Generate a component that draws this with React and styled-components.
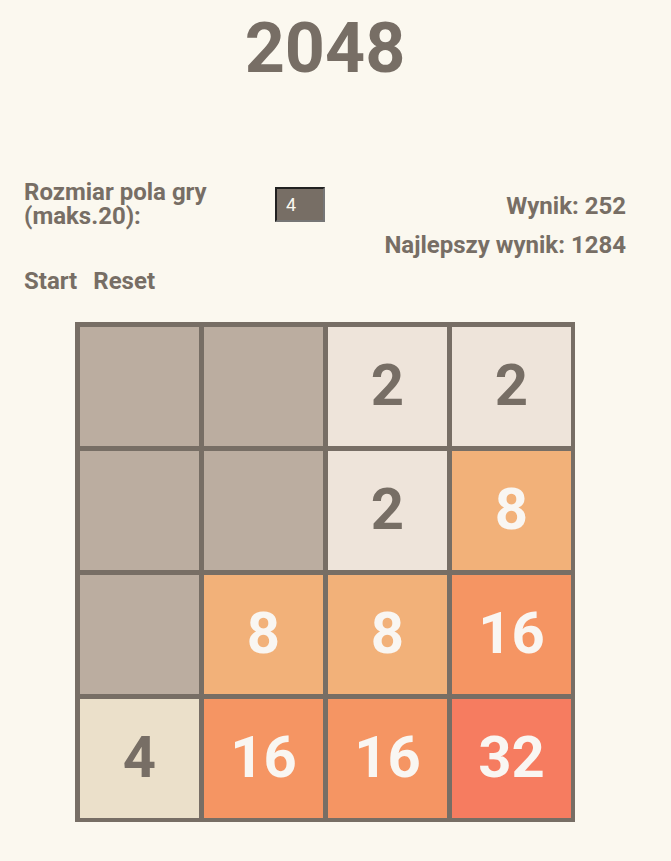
import React from "react";
import styled, { createGlobalStyle } from "styled-components";

const GlobalStyle = createGlobalStyle`
  * { box-sizing: border-box; }
  body {
    margin: 0;
    background: #fbf8ef;
    color: #776e65;
    font-family: Roboto, "Open Sans", sans-serif;
    font-weight: 700;
  }
`;

const Page = styled.main`
  padding: 10px 45px 38px 24px;
`;

const Title = styled.h1`
  margin: 0 0 94px;
  font-size: 70px;
  line-height: 76px;
  text-align: center;
`;

const Panel = styled.section`
  display: flex;
  justify-content: space-between;
  align-items: flex-start;
`;

const SizeField = styled.div`
  display: flex;
  align-items: center;
  gap: 40px;
  height: 48px;
`;

const SizeLabel = styled.label`
  width: 211px;
  font-size: 24px;
  line-height: 24px;
`;

const SizeInput = styled.input`
  width: 50px;
  height: 35px;
  padding: 1px 9px;
  border: 2px inset #767676;
  background: #776e65;
  color: #fcf9f0;
  font: 400 18px/24px Roboto, sans-serif;
`;

const Scores = styled.div`
  padding-top: 12px;
  font-size: 24px;
  text-align: right;
`;

const Score = styled.p`
  margin: 0;
  line-height: 28px;
  white-space: nowrap;

  & + & { margin-top: 11px; }
`;

const Actions = styled.div`
  display: flex;
  gap: 16px;
  margin: 8px 0 27px;
`;

const Action = styled.button`
  padding: 0;
  border: 0;
  background: none;
  color: inherit;
  font: inherit;
  font-size: 24px;
  line-height: 28px;
  cursor: pointer;
`;

const Board = styled.div`
  display: grid;
  grid-template-columns: repeat(4, 1fr);
  grid-template-rows: repeat(4, 1fr);
  gap: 5px;
  width: 100%;
  max-width: 500px;
  aspect-ratio: 1;
  margin: 0 auto;
  padding: 5px 4px 4px 5px;
  background: #776e65;
`;

const palette = {
  0: "#bbada0",
  2: "#eee4da",
  4: "#ebe0ca",
  8: "#f2b179",
  16: "#f59563",
  32: "#f67c60",
};

const Tile = styled.div`
  display: grid;
  place-items: center;
  padding-bottom: 4px;
  background: ${({ $value }) => palette[$value]};
  color: ${({ $value }) => ($value > 4 ? "#f9f6f2" : "#776e65")};
  font-size: 58px;
  line-height: 60px;
`;

const tiles = [0, 0, 2, 2, 0, 0, 2, 8, 0, 8, 8, 16, 4, 16, 16, 32];

export default function App() {
  return (
    <Page>
      <GlobalStyle />
      <Title>2048</Title>
      <Panel>
        <SizeField>
          <SizeLabel htmlFor="size">Rozmiar pola gry (maks.20):</SizeLabel>
          <SizeInput id="size" type="text" inputMode="numeric" defaultValue="4" />
        </SizeField>
        <Scores>
          <Score>Wynik: 252</Score>
          <Score>Najlepszy wynik: 1284</Score>
        </Scores>
      </Panel>
      <Actions>
        <Action type="button">Start</Action>
        <Action type="button">Reset</Action>
      </Actions>
      <Board>
        {tiles.map((value, index) => (
          <Tile key={index} $value={value}>{value || ""}</Tile>
        ))}
      </Board>
    </Page>
  );
}
